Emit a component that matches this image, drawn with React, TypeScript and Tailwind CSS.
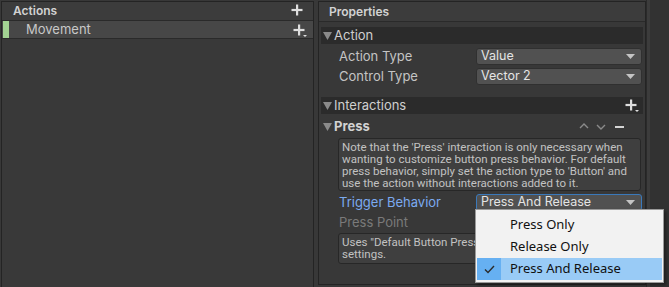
import React from "react";

const Tri = () => (
  <svg width="9" height="8" viewBox="0 0 9 8" className="shrink-0">
    <path d="M0 0 L9 0 L4.5 8 Z" fill="#8a8a8a" />
  </svg>
);

const DropArrow = () => (
  <svg width="9" height="6" viewBox="0 0 9 6">
    <path d="M0 0 L9 0 L4.5 5 Z" fill="#c4c4c4" />
  </svg>
);

const PlusIcon = ({ dropdown = false }: { dropdown?: boolean }) => (
  <svg width="14" height="14" viewBox="0 0 14 14">
    <rect x="5" y="0.5" width="2.2" height="11" fill="#dedede" />
    <rect x="0.5" y="4.9" width="11" height="2.2" fill="#dedede" />
    {dropdown && <path d="M10 11 L14 11 L12 13 Z" fill="#dedede" />}
  </svg>
);

const Dropdown = ({ value, focused = false }: { value: string; focused?: boolean }) => (
  <div
    className={`w-[166px] h-[17px] rounded-[3px] bg-[#515151] flex items-center justify-between pl-[4px] pr-[6px] text-[12.5px] text-[#e4e4e4] border ${
      focused ? "border-[#3a79bb]" : "border-[#303030]"
    }`}
  >
    <span className="leading-none">{value}</span>
    <DropArrow />
  </div>
);

const helpFont = { fontFamily: "Roboto, 'Noto Sans', sans-serif" };

export default function App() {
  return (
    <div
      className="w-[669px] h-[287px] bg-[#383838] flex overflow-hidden relative text-[#c4c4c4]"
      style={{ fontFamily: "Inter, 'Noto Sans', sans-serif" }}
    >
      {/* Left panel */}
      <div className="w-[314px] h-full pt-[1px] pl-[1px] shrink-0">
        <div className="h-full border-l border-t border-r border-[#242424] flex flex-col bg-[#393939]">
          <div className="h-[19px] bg-[#3c3c3c] flex items-center justify-between pl-[11px] pr-[8px] border-b border-[#2a2a2a]">
            <span className="text-[12px] font-semibold text-[#d2d2d2]">Actions</span>
            <PlusIcon />
          </div>
          <div className="h-[18px] bg-[#474747] flex items-center border-b border-[#2a2a2a]">
            <div className="w-[6px] h-full bg-[#a3d393] ml-[1px]" />
            <span className="ml-[17px] text-[13px] text-[#c8c8c8] flex-1">Movement</span>
            <div className="pr-[6px] pt-[2px]">
              <PlusIcon dropdown />
            </div>
          </div>
        </div>
      </div>
      {/* gap */}
      <div className="w-[4px] shrink-0" />
      {/* Right panel */}
      <div className="w-[328px] h-full pt-[1px] shrink-0">
        <div className="h-[284px] border-l border-t border-r border-b border-[#242424] flex flex-col bg-[#383838]">
          <div className="h-[20px] bg-[#3c3c3c] flex items-center pl-[10px] border-b border-[#2a2a2a]">
            <span className="text-[12px] font-semibold text-[#d2d2d2]">Properties</span>
          </div>
          <div className="px-[2px] pt-[5px] flex flex-col">
            {/* Action header */}
            <div className="h-[17px] bg-[#2b2b2b] flex items-center pl-[2px] gap-[2px]">
              <Tri />
              <span className="text-[13px] text-[#cfcfcf]">Action</span>
            </div>
            <div className="flex items-center h-[17px] mt-[4px] pl-[18px]">
              <span className="w-[137px] text-[13px]">Action Type</span>
              <Dropdown value="Value" />
            </div>
            <div className="flex items-center h-[17px] mt-[3px] pl-[18px]">
              <span className="w-[137px] text-[13px]">Control Type</span>
              <Dropdown value="Vector 2" />
            </div>
            {/* Interactions header */}
            <div className="h-[17px] bg-[#2b2b2b] flex items-center pl-[2px] gap-[2px] mt-[12px] pr-[4px]">
              <Tri />
              <span className="text-[13px] text-[#cfcfcf] flex-1">Interactions</span>
              <PlusIcon dropdown />
            </div>
            {/* Press */}
            <div className="h-[17px] flex items-center pl-[2px] gap-[2px] mt-[4px] pr-[4px]">
              <Tri />
              <span className="text-[13px] font-bold text-[#d2d2d2] flex-1">Press</span>
              <svg width="60" height="10" viewBox="0 0 60 10">
                <path d="M1 6 L5 2 L9 6" stroke="#8a8a8a" strokeWidth="1.4" fill="none" />
                <path d="M18 3 L22 7 L26 3" stroke="#8a8a8a" strokeWidth="1.4" fill="none" />
                <rect x="36" y="4" width="9" height="2" fill="#d4d4d4" />
              </svg>
            </div>
            <div
              className="ml-[17px] mr-[2px] mt-[3px] h-[53px] overflow-hidden rounded-[3px] border border-[#272727] bg-[#3f3f3f] pl-[3px] pr-[2px] pt-[2px] text-[11.5px] leading-[12px] text-[#c2c2c2]"
              style={helpFont}
            >
              Note that the 'Press' interaction is only necessary when wanting to customize button press behavior. For default press behavior, simply set the action type to 'Button' and use the action without interactions added to it.
            </div>
            <div className="flex items-center h-[17px] mt-[3px] pl-[18px]">
              <span className="w-[137px] text-[13px] text-[#7baaf0]">Trigger Behavior</span>
              <Dropdown value="Press And Release" focused />
            </div>
            <div className="flex items-center h-[17px] mt-[3px] pl-[18px]">
              <span className="w-[137px] text-[13px] text-[#7a7a7a]">Press Point</span>
            </div>
            <div
              className="ml-[17px] mr-[2px] mt-[2px] h-[31px] overflow-hidden rounded-[3px] border border-[#272727] bg-[#3f3f3f] pl-[3px] pr-[2px] pt-[2px] text-[11.5px] leading-[12px] text-[#c2c2c2]"
              style={helpFont}
            >
              Uses "Default Button Press Point" set in project-wide input settings.
            </div>
          </div>
        </div>
      </div>
      {/* scrollbar strip */}
      <div className="w-[4px] h-full bg-[#3c3c3c] border-l border-[#2a2a2a] shrink-0" />
      <div className="flex-1 h-full bg-[#323232]" />

      {/* Popup menu */}
      <div
        className="absolute left-[475px] top-[209px] w-[189px] h-[74px] bg-[#f2f2f2] border border-[#9a9a9a] flex flex-col pt-[4px] text-[13px] text-[#101010] shadow-[2px_2px_3px_rgba(0,0,0,0.4)]"
        style={{ fontFamily: "'Segoe UI', 'Noto Sans', sans-serif" }}
      >
        <div className="h-[22px] flex items-center pl-[34px]">Press Only</div>
        <div className="h-[22px] flex items-center pl-[34px]">Release Only</div>
        <div className="h-[22px] flex items-center bg-[#99cbf6] mx-[1px]">
          <div className="w-[24px] h-full bg-[#66b0f2] flex items-center justify-center">
            <svg width="11" height="9" viewBox="0 0 11 9">
              <path d="M1 4.5 L4 7.5 L10 1" stroke="#2b2b2b" strokeWidth="1.4" fill="none" />
            </svg>
          </div>
          <span className="pl-[9px]">Press And Release</span>
        </div>
      </div>
    </div>
  );
}
